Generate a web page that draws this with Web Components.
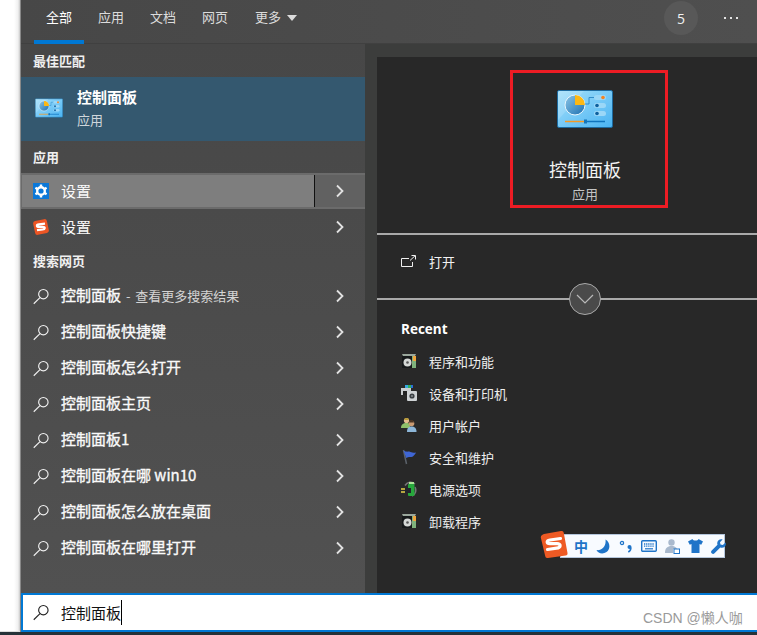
<!DOCTYPE html>
<html lang="zh">
<head>
<meta charset="utf-8">
<title>搜索</title>
<style>
  html, body { margin: 0; height: 635px; overflow: hidden; background: #fff; }
  body { font-family: "Noto Sans CJK SC", "Noto Sans", sans-serif; }
</style>
</head>
<body>
<search-page>
  <nav-bar slot="nav"></nav-bar>
  <results-list slot="results">
    <section-label style="height:33px">最佳匹配</section-label>
    <best-match></best-match>
    <section-label style="height:32px">应用</section-label>
    <result-row icon="gear" hover>设置</result-row>
    <result-row icon="sogou">设置</result-row>
    <section-label style="height:33px;padding-bottom:3px">搜索网页</section-label>
    <result-row icon="search">控制面板<small> - 查看更多搜索结果</small></result-row>
    <result-row icon="search">控制面板快捷键</result-row>
    <result-row icon="search">控制面板怎么打开</result-row>
    <result-row icon="search">控制面板主页</result-row>
    <result-row icon="search">控制面板1</result-row>
    <result-row icon="search">控制面板在哪 win10</result-row>
    <result-row icon="search">控制面板怎么放在桌面</result-row>
    <result-row icon="search">控制面板在哪里打开</result-row>
  </results-list>
  <detail-panel slot="detail">
    <recent-item icon="programs">程序和功能</recent-item>
    <recent-item icon="devices">设备和打印机</recent-item>
    <recent-item icon="users">用户帐户</recent-item>
    <recent-item icon="flag">安全和维护</recent-item>
    <recent-item icon="power">电源选项</recent-item>
    <recent-item icon="programs">卸载程序</recent-item>
  </detail-panel>
  <search-box slot="search">控制面板</search-box>
</search-page>
<ime-bar></ime-bar>
<water-mark>CSDN @懒人咖</water-mark>

<script>
const panelIcon = `<svg viewBox="0 0 56 38" width="100%" height="100%">
  <defs>
    <linearGradient id="cpbg" x1="0" y1="0" x2="1" y2="1"><stop offset="0" stop-color="#a5e0fb"/><stop offset="1" stop-color="#49b3f2"/></linearGradient>
    <linearGradient id="cppie" x1="0" y1="0" x2="1" y2="1"><stop offset="0" stop-color="#8cc6e8"/><stop offset="1" stop-color="#1c6fb0"/></linearGradient>
  </defs>
  <rect x=".5" y=".5" width="55" height="37" rx="1.5" fill="url(#cpbg)" stroke="#1d6a9f"/>
  <path d="M1 1h26L1 30z" fill="#fff" opacity=".14"/>
  <circle cx="18" cy="15" r="10" fill="url(#cppie)" stroke="#e8f6fd" stroke-width="1"/>
  <path d="M18 5a10 10 0 0 1 10 10H18z" fill="#fdb813"/>
  <path d="M28 14h4V7.500h5" fill="none" stroke="#2a86c4" stroke-width=".9"/>
  <rect x="37" y="5" width="12" height="5" rx="2.500" fill="#9bd7f7"/><circle cx="46" cy="7.500" r="1.800" fill="#f5821f"/>
  <rect x="37" y="13" width="12" height="5" rx="2.500" fill="#9bd7f7"/><circle cx="40" cy="15.500" r="1.800" fill="#0d5f9e"/>
  <rect x="37" y="21" width="12" height="5" rx="2.500" fill="#9bd7f7"/><circle cx="40" cy="23.500" r="1.800" fill="#0d5f9e"/>
  <path d="M8 31.500h19" stroke="#f59a23" stroke-width="1.500"/><path d="M27 31.500h21" stroke="#0f74bd" stroke-width="1.500"/>
  <rect x="27" y="29.500" width="3" height="4" fill="#1476bb"/>
</svg>`;

const searchGlass = (c) => `<svg viewBox="0 0 17 17" width="17" height="17" fill="none" stroke="${c}" stroke-width="1.200">
  <circle cx="11" cy="6" r="5"/><path d="M7.400 9.600 .8 16.200"/></svg>`;

const ICONS = {
  search: searchGlass('#f2f2f2'),
  gear: `<svg viewBox="0 0 16 16" width="16" height="16"><rect width="16" height="16" fill="#0b78d8"/>
    <circle cx="8" cy="8" r="3.800" fill="none" stroke="#fff" stroke-width="2.400"/>
    <path d="M8 1.500v2.800M8 11.700v2.800M2.400 4.800l2.400 1.400M11.200 9.800l2.400 1.400M2.400 11.200l2.400-1.400M11.200 6.200l2.400-1.400" stroke="#fff" stroke-width="2.400"/></svg>`,
  sogou: `<svg viewBox="0 0 16 16" width="16" height="16"><rect x="1" y="1" width="14" height="14" rx="2.400" fill="#ec5524" transform="rotate(-12 8 8)"/>
    <path d="M12 4.700 6 5.400C3 5.800 3.400 7.900 6 7.900h3.800c2.700 0 2.500 2.300-.2 2.600L4 11.200" fill="none" stroke="#fff" stroke-width="2.200"/></svg>`,
  programs: `<svg viewBox="0 0 16 16" width="16" height="16"><path d="M1 1h14l-1 2H2z" fill="#9aa79c"/><rect x="1" y="3" width="14" height="12" fill="#16191a"/>
    <rect x="11" y="3" width="4" height="12" fill="#7fb27c"/><rect x="12" y="3" width="3" height="5" fill="#f0a53c"/>
    <circle cx="6.500" cy="9.500" r="4" fill="#d5d8d6"/><circle cx="6.500" cy="9.500" r="1.300" fill="#555"/></svg>`,
  devices: `<svg viewBox="0 0 16 16" width="16" height="16"><rect x="4" y="0" width="3" height="3" fill="#36a7e0"/><rect x="7" y="0" width="3" height="3" fill="#2fae5a"/><rect x="10" y="0" width="2" height="3" fill="#2b6fd6"/>
    <rect x="0" y="3" width="10" height="7" fill="#c9cdcf"/><rect x="2" y="6" width="4" height="4" fill="#222"/>
    <rect x="6" y="6" width="10" height="10" rx="1" fill="#cfd3d5"/><circle cx="11" cy="11" r="2.600" fill="#3c4144"/><circle cx="11" cy="11" r="1" fill="#8a9094"/></svg>`,
  users: `<svg viewBox="0 0 16 16" width="16" height="16"><circle cx="5.500" cy="3.500" r="2.600" fill="#e3bd8f"/><path d="M3 3l1-2h3l1 2z" fill="#b89a3c"/><path d="M0 11c0-3.500 2-5 5.500-5S9 8 9 11z" fill="#8fbf6a"/>
    <circle cx="10.500" cy="6.500" r="2.800" fill="#c99a72"/><path d="M8 5.500l1-2.500h3l1 2.500z" fill="#4a3423"/><path d="M6 15c0-4 1.500-5.500 4.500-5.500S15.500 11 15.500 15z" fill="#8db6d8"/></svg>`,
  flag: `<svg viewBox="0 0 16 16" width="16" height="16"><path d="M2.500 1 5.500 15" stroke="#5c636b" stroke-width="1.500"/><path d="M2.500 1.500c3 2 4.500.5 7 1.500 2 .8 3.500 1 5.500.5-.8 2-2 2.500-2.800 3.800-1.500 1.500-4-.5-7 1.700z" fill="#3f66d4"/></svg>`,
  power: `<svg viewBox="0 0 16 16" width="16" height="16"><path d="M4 4.500a6.500 6.500 0 0 1 10-1.500" fill="none" stroke="#777" stroke-width="1.500"/><path d="M14 6a6.500 6.500 0 0 1-3 9" fill="none" stroke="#777" stroke-width="1.500"/><rect x="8" y="1" width="5" height="2" fill="#aee39a"/><rect x="7" y="3" width="6.500" height="12" rx="1" fill="#27a83c"/>
    <rect x="4" y="7" width="6" height="5" fill="#20242a"/><path d="M0 8h4M0 11h4" stroke="#e3cf4a" stroke-width="1.300"/></svg>`
};

class SearchPage extends HTMLElement {
  constructor() { super(); this.attachShadow({ mode: 'open' }); }
  connectedCallback() {
    this.shadowRoot.innerHTML = `
      <style>
        :host { display: flex; flex-direction: column; height: 635px; color: #fff; }
        .main { display: flex; height: 632px; }
        .edge { width: 20px; background: linear-gradient(90deg, #fff 70%, #f0f0f0 90%, #c9c9c9); border-bottom: 1px solid #ddd; box-sizing: border-box; }
        .window { flex: 1; min-width: 0; display: flex; flex-direction: column; border-left: 1px solid #888; }
        .body { height: 549px; display: flex; background: #3c3d3c; }
        .left { width: 344px; background: linear-gradient(180deg, #474747, #515151); }
        .right { flex: 1; min-width: 0; margin-left: 12px; padding-top: 13px; }
        .foot { height: 3px; background: #263238; }
      </style>
      <div class="main">
        <div class="edge"></div>
        <div class="window">
          <slot name="nav"></slot>
          <div class="body">
            <div class="left"><slot name="results"></slot></div>
            <div class="right"><slot name="detail"></slot></div>
          </div>
          <slot name="search"></slot>
        </div>
      </div>
      <div class="foot"></div>
    `;
  }
}

class NavBar extends HTMLElement {
  constructor() { super(); this.attachShadow({ mode: 'open' }); }
  connectedCallback() {
    const tabs = ['全部', '应用', '文档', '网页'];
    this.shadowRoot.innerHTML = `
      <style>
        :host { display: flex; align-items: stretch; height: 44px; padding-left: 13px; padding-right: 18px; box-sizing: border-box;
          background: linear-gradient(90deg, #474747, #4f4f4f); border-bottom: 1px solid #404040; font-size: 13px; color: #dcdcdc; }
        .tab { display: flex; align-items: center; padding: 0 12px 11px; margin-right: 2px; box-sizing: border-box; height: 44px; }
        .tab.on { color: #fff; border-bottom: 4px solid #0078d4; padding-bottom: 7px; }
        .tab.last { margin-left: 1px; }
        .caret { width: 0; height: 0; margin: 2px 0 0 6px; border: 5px solid transparent; border-top: 6px solid #dcdcdc; border-bottom: 0; }
        .fill { flex: 1; }
        .badge { width: 34px; height: 34px; margin-top: 1px; border-radius: 50%; background: #585858; color: #f2f2f2; font: 14px "Open Sans", sans-serif;
          display: flex; align-items: center; justify-content: center; margin-right: 26px; }
        .dots { display: flex; gap: 3px; height: 36px; align-items: center; }
        .dots i { width: 2px; height: 2px; background: #e4e4e4; margin-right: 1px; }
      </style>
      ${tabs.map((t, i) => `<div class="tab${i ? '' : ' on'}">${t}</div>`).join('')}
      <div class="tab last">更多<span class="caret"></span></div>
      <div class="fill"></div>
      <div class="badge">5</div>
      <div class="dots"><i></i><i></i><i></i></div>
    `;
  }
}

class ResultsList extends HTMLElement {
  constructor() { super(); this.attachShadow({ mode: 'open' }); }
  connectedCallback() {
    this.shadowRoot.innerHTML = `<style>:host { display: block; }</style><slot></slot>`;
  }
}

class SectionLabel extends HTMLElement {
  constructor() { super(); this.attachShadow({ mode: 'open' }); }
  connectedCallback() {
    this.shadowRoot.innerHTML = `
      <style>
        :host { display: flex; align-items: center; padding: 0 0 1px 12px; font-size: 13px; font-weight: 700; color: #f0f0f0; box-sizing: border-box; }
      </style><slot></slot>`;
  }
}

class BestMatch extends HTMLElement {
  constructor() { super(); this.attachShadow({ mode: 'open' }); }
  connectedCallback() {
    this.shadowRoot.innerHTML = `
      <style>
        :host { display: flex; align-items: center; height: 64px; background: #34586f; padding-left: 14px; }
        .ico { width: 28px; height: 20px; margin-right: 14px; margin-top: -3px; }
        .name { font-size: 15px; font-weight: 700; color: #fff; line-height: 22px; }
        .kind { font-size: 13px; color: #cfd6db; line-height: 24px; }
      </style>
      <div class="ico">${panelIcon}</div>
      <div><div class="name">控制面板</div><div class="kind">应用</div></div>
    `;
  }
}

class ResultRow extends HTMLElement {
  constructor() { super(); this.attachShadow({ mode: 'open' }); }
  connectedCallback() {
    const icon = ICONS[this.getAttribute('icon')];
    this.shadowRoot.innerHTML = `
      <style>
        :host { display: flex; height: 36px; color: #fafafa; font-size: 15px; -webkit-text-stroke: .35px #fafafa; }
        .main { flex: 1; display: flex; align-items: center; gap: 12px; padding-left: 12px; box-sizing: border-box; min-width: 0; }
        .ico { width: 16px; height: 17px; display: flex; align-items: center; }
        .txt { margin-top: -3px; }
        .go { width: 50px; display: flex; align-items: center; justify-content: center; }
        :host([hover]) { background: #616161; border: solid #6b6b6b; border-width: 2px 0 2px 1px; height: 32px; -webkit-text-stroke: 0; }
        :host([hover]) .main { background: #7e7e7e; border-right: 1px solid #111; padding-left: 11px; }
        :host([hover]) .txt { margin-top: -2px; }
        :host([icon="sogou"]) { -webkit-text-stroke: 0; }
        :host([icon="sogou"]) .txt { margin-top: -2px; }
        ::slotted(small) { font-size: 13px; color: #d4d4d4; word-spacing: 2px; -webkit-text-stroke: 0; }
      </style>
      <div class="main"><span class="ico">${icon}</span><span class="txt"><slot></slot></span></div>
      <div class="go"><svg width="10" height="14" viewBox="0 0 10 14" fill="none" stroke="#e2e2e2" stroke-width="1.800"><path d="M2 1.500 7.500 7 2 12.500"/></svg></div>
    `;
  }
}

class DetailPanel extends HTMLElement {
  constructor() { super(); this.attachShadow({ mode: 'open' }); }
  connectedCallback() {
    this.shadowRoot.innerHTML = `
      <style>
        :host { display: block; position: relative; height: 536px; background: #282828; color: #f2f2f2; font-size: 13px; }
        .hero { height: 176px; padding-left: 36px; box-sizing: border-box; display: flex; flex-direction: column; align-items: center; }
        .hero .ico { width: 56px; height: 38px; margin-top: 33px; }
        .hero .title { font-size: 18px; line-height: 28px; margin-top: 27px; }
        .hero .kind { font-size: 13px; line-height: 20px; color: #c4c4c4; margin-top: 1px; }
        .mark { position: absolute; left: 133px; top: 13px; width: 158px; height: 138px; border: 3px solid #ed1c24; box-sizing: border-box; }
        .rule { height: 2px; background: #a9a9a9; position: relative; }
        .open { height: 63px; display: flex; align-items: center; gap: 13px; padding: 0 0 10px 24px; box-sizing: border-box; }
        .more { position: absolute; left: 192px; top: -15px; width: 32px; height: 32px; box-sizing: border-box; border: 1px solid #a9a9a9; border-radius: 50%;
          background: #4a4a4a; display: flex; align-items: center; justify-content: center; }
        .recent { padding: 20px 24px 0; font: 700 13.500px/18px "Open Sans", sans-serif; height: 47px; box-sizing: border-box; color: #fff; }
      </style>
      <div class="hero">
        <div class="ico">${panelIcon}</div>
        <div class="title">控制面板</div>
        <div class="kind">应用</div>
      </div>
      <div class="mark"></div>
      <div class="rule"></div>
      <div class="open">
        <svg width="15" height="14" viewBox="0 0 15 14" fill="none" stroke="#f0f0f0" stroke-width="1"><path d="M8 3.500H.5v8h11V7"/><path d="M9 5.500 14 .8M10.500.500h4v4"/></svg>
        <span>打开</span>
      </div>
      <div class="rule">
        <div class="more"><svg width="18" height="10" viewBox="0 0 18 10" fill="none" stroke="#b9b9b9" stroke-width="1.200"><path d="M1 1l8 8 8-8"/></svg></div>
      </div>
      <div class="recent">Recent</div>
      <slot></slot>
    `;
  }
}

class RecentItem extends HTMLElement {
  constructor() { super(); this.attachShadow({ mode: 'open' }); }
  connectedCallback() {
    this.shadowRoot.innerHTML = `
      <style>
        :host { display: flex; align-items: center; gap: 12px; height: 32px; padding: 0 0 4px 24px; box-sizing: border-box; font-size: 13px; color: #eee; }
        .ico { width: 16px; height: 16px; display: block; margin-top: -1px; }
      </style>
      <span class="ico">${ICONS[this.getAttribute('icon')]}</span><span><slot></slot></span>
    `;
  }
}

class SearchBox extends HTMLElement {
  constructor() { super(); this.attachShadow({ mode: 'open' }); }
  connectedCallback() {
    this.shadowRoot.innerHTML = `
      <style>
        :host { display: flex; align-items: center; height: 39px; box-sizing: border-box; background: #fff; color: #111; font-size: 15px;
          border: solid #0078d4; border-width: 2px 0 2px 2px; padding-left: 10px; gap: 12px; }
        .ico { width: 16px; height: 17px; display: flex; align-items: center; }
        .text { display: flex; align-items: center; }
        .caret { width: 1px; height: 25px; background: #000; }
      </style>
      <span class="ico">${searchGlass('#222')}</span>
      <span class="text"><slot></slot><i class="caret"></i></span>
    `;
  }
}

class ImeBar extends HTMLElement {
  constructor() { super(); this.attachShadow({ mode: 'open' }); }
  connectedCallback() {
    this.shadowRoot.innerHTML = `
      <style>
        :host { position: absolute; left: 540px; top: 531px; width: 185px; height: 27px; }
        .bar { margin-left: 20px; margin-top: 3px; height: 24px; box-sizing: border-box; background: #f8fbff; border: 1px solid #b4c6dc; display: flex; align-items: center;
          padding-left: 13px; gap: 8px; color: #1f74c8; }
        .zh { font-size: 14px; font-weight: 700; width: 14px; line-height: 14px; }
        .logo { position: absolute; left: 0; top: 0; }
        svg { display: block; flex: none; }
      </style>
      <div class="bar">
        <span class="zh">中</span>
        <svg width="15" height="15" viewBox="0 0 15 15"><path d="M9.500 .5c5 3 5 9.500 1 12.500C7 15.500 2 14.500 .5 11 5 12 10.500 8 9.500 .5z" fill="#1f74c8"/></svg>
        <svg width="14" height="14" viewBox="0 0 14 14"><circle cx="3" cy="4" r="1.600" fill="none" stroke="#1f74c8" stroke-width="1.300"/><circle cx="10.500" cy="8" r="2" fill="#1f74c8"/><path d="M11.800 8.500c.2 2-.8 3.500-2.500 4.500" fill="none" stroke="#1f74c8" stroke-width="1.600"/></svg>
        <svg width="16" height="12" viewBox="0 0 16 12"><rect x=".7" y=".7" width="14.600" height="10.600" rx="1" fill="#f8fbff" stroke="#1f74c8" stroke-width="1.400"/><path d="M3 4h10M3 6.200h10" stroke="#1f74c8" stroke-dasharray="1.300 .8" stroke-width="1.300"/><path d="M4 8.800h8" stroke="#1f74c8" stroke-width="1.200"/></svg>
        <svg width="15" height="15" viewBox="0 0 15 15"><circle cx="6.500" cy="3.500" r="3.200" fill="#a9b9cd"/><path d="M0 14c0-5 2.500-7 6.500-7s5 2 5.500 3H8v4z" fill="#a9b9cd"/><rect x="9" y="10" width="5.500" height="4.500" fill="#fff" stroke="#1f74c8"/></svg>
        <svg width="15" height="14" viewBox="0 0 15 14"><path d="M4.500 0 0 2.500l1.800 3.300 1.700-.8V14h8V5l1.700.8L15 2.500 10.500 0c-.5 2-5.500 2-6 0z" fill="#1f74c8"/></svg>
        <svg width="15" height="15" viewBox="0 0 15 15"><path d="M14.600 3.400 11.800 6 9.500 5.500 9 3.200 11.600.4C9.300-.4 6.400 1 6.200 3.900c0 .8.100 1.300.3 1.800L.7 11.500c-1 1-.7 2.100 0 2.800.8.700 1.900.9 2.800 0l5.800-5.800c3.300 1.200 6.600-1.600 5.300-5.100z" fill="#1f74c8"/></svg>
      </div>
      <svg class="logo" width="28" height="27" viewBox="0 0 28 27">
        <path d="M4 3 21 0c1.500-.2 2.500.5 2.800 2L27.500 22c.2 1.300-.5 2.300-1.800 2.500L8 27c-1.500.2-2.500-.5-2.800-2L.8 6.500C.6 4.800 2.500 3.300 4 3z" fill="#ee5a24"/>
        <path d="M20.500 7.500 10 9c-4 .7-3.500 3.700 0 3.700h7c4.500 0 4 4-.5 4.500L7.500 18.500" fill="none" stroke="#fff" stroke-width="3.200" stroke-linecap="round"/>
      </svg>
    `;
  }
}

class WaterMark extends HTMLElement {
  constructor() { super(); this.attachShadow({ mode: 'open' }); }
  connectedCallback() {
    this.shadowRoot.innerHTML = `
      <style>
        :host { position: absolute; left: 643px; top: 608px; font: 14px/20px "Liberation Sans", "Noto Sans CJK SC", sans-serif; color: #9a9a9a; white-space: nowrap; }
      </style><slot></slot>`;
  }
}

customElements.define('search-page', SearchPage);
customElements.define('nav-bar', NavBar);
customElements.define('results-list', ResultsList);
customElements.define('section-label', SectionLabel);
customElements.define('best-match', BestMatch);
customElements.define('result-row', ResultRow);
customElements.define('detail-panel', DetailPanel);
customElements.define('recent-item', RecentItem);
customElements.define('search-box', SearchBox);
customElements.define('ime-bar', ImeBar);
customElements.define('water-mark', WaterMark);
</script>
</body>
</html>
